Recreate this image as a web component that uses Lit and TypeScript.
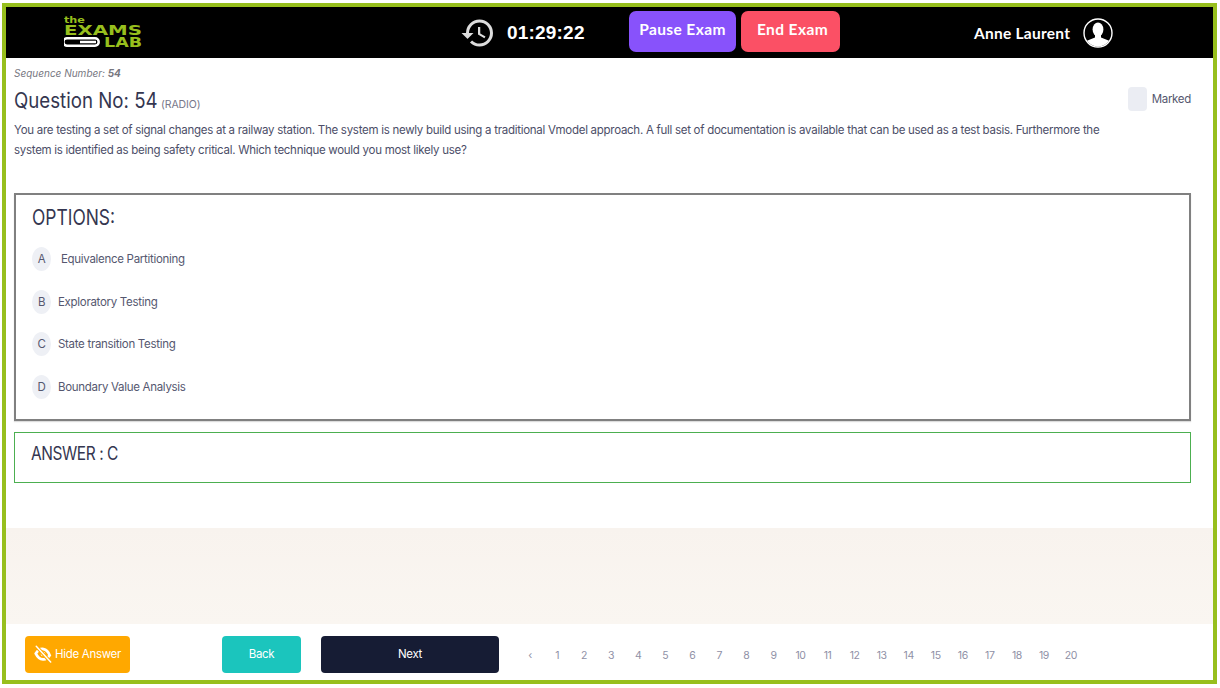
import { LitElement, css, html, svg } from 'lit';
import { customElement, state } from 'lit/decorators.js';

const OPTIONS = [
  { key: 'A', text: 'Equivalence Partitioning', indent: true },
  { key: 'B', text: 'Exploratory Testing', indent: false },
  { key: 'C', text: 'State transition Testing', indent: false },
  { key: 'D', text: 'Boundary Value Analysis', indent: false },
];

const logo = svg`
  <svg class="logo" viewBox="0 0 79 38" width="79" height="38">
    <text x="0" y="10" textLength="21" lengthAdjust="spacingAndGlyphs" class="logo-text small">the</text>
    <text x="0" y="22" textLength="78" lengthAdjust="spacingAndGlyphs" class="logo-text">EXAMS</text>
    <text x="40" y="34" textLength="38" lengthAdjust="spacingAndGlyphs" class="logo-text">LAB</text>
    <path d="M3 25.300H31a3.400 3.400 0 0 1 0 7.400H3a3.700 3.700 0 0 1 0-7.400zM16 29H32" fill="none" stroke="#fff" stroke-width="2.500" />
  </svg>
`;

const historyIcon = svg`
  <svg class="history" viewBox="0 0 24 24" width="36" height="36">
    <path fill="#ddd" d="M13 3a9 9 0 0 0-9 9H1l3.89 3.89.07.14L9 12H6c0-3.87 3.13-7 7-7s7 3.13 7 7-3.13 7-7 7c-1.93 0-3.68-.79-4.94-2.06l-1.42 1.42A8.954 8.954 0 0 0 13 21a9 9 0 0 0 0-18zm-1 5v5l4.28 2.54.72-1.21-3.5-2.08V8H12z" />
  </svg>
`;

const avatarIcon = svg`
  <svg viewBox="0 0 30 30" width="30" height="30">
    <defs><clipPath id="av"><circle cx="15" cy="15" r="13.400" /></clipPath></defs>
    <circle cx="15" cy="15" r="14" fill="#000" stroke="#fff" stroke-width="1.400" />
    <g clip-path="url(#av)" fill="#fff">
      <ellipse cx="15" cy="11.500" rx="5.400" ry="7" />
      <path d="M12 16h6v3.400l7.500 3.200c1.600.8 2.500 2 2.500 3.400v4H2v-4c0-1.400.9-2.600 2.500-3.400L12 19.400z" />
    </g>
  </svg>
`;

const eyeOffIcon = svg`
  <svg viewBox="0 0 20 20" width="18" height="18">
    <path d="M2 9.500C4.500 5.500 7.500 4 10.500 4.500c3 .5 5.500 3 7 7-2 3-4.500 4.800-7.500 4.500-3-.3-6-2.500-8-6.500z" fill="none" stroke="#fff" stroke-width="3" />
    <circle cx="10" cy="10" r="2.600" fill="#fff" />
    <path d="M2.500 1.500L18.500 19" stroke="#ffa800" stroke-width="4" />
    <path d="M2.500 1.500L18.500 19" stroke="#fff" stroke-width="1.600" stroke-linecap="round" />
  </svg>
`;

@customElement('app-root')
export class AppRoot extends LitElement {
  @state() pages = Array.from({ length: 20 }, (_, i) => i + 1);

  render() {
    return html`
      <div class="frame">
        <header class="topbar">
          ${logo}
          ${historyIcon}
          <span class="timer">01:29:22</span>
          <button class="top-btn pause">Pause Exam</button>
          <button class="top-btn end">End Exam</button>
          <span class="user">Anne Laurent</span>
          ${avatarIcon}
        </header>

        <main class="content">
          <div class="sequence">Sequence Number: <b>54</b></div>
          <div class="question-head">
            <h1><span class="squeeze">Question No: 54</span><small>(RADIO)</small></h1>
            <label class="marked"><span class="check"></span>Marked</label>
          </div>
          <p class="question">
            You are testing a set of signal changes at a railway station. The system is newly build using a traditional Vmodel approach. A full set of documentation is available that can be used as a test basis. Furthermore the system is identified as being safety critical. Which technique would you most likely use?
          </p>

          <section class="options">
            <h2><span class="squeeze">OPTIONS:</span></h2>
            ${OPTIONS.map(
              (o) => html`
                <div class="option">
                  <span class="key">${o.key}</span>
                  <span class="label ${o.indent ? 'indent' : ''}">${o.text}</span>
                </div>
              `,
            )}
          </section>

          <section class="answer"><span class="squeeze">ANSWER : C</span></section>
        </main>

        <div class="band"></div>

        <footer class="footer">
          <button class="btn hide">${eyeOffIcon}Hide Answer</button>
          <button class="btn back">Back</button>
          <button class="btn next">Next</button>
          <nav class="pager">
            <span class="page">‹</span>
            ${this.pages.map((p) => html`<span class="page">${p}</span>`)}
          </nav>
        </footer>
      </div>
    `;
  }

  static styles = css`
    :host {
      display: block;
      box-sizing: border-box;
      width: 1220px;
      height: 688px;
      padding: 3px 3px 4px 2px;
      background: #fff;
      font-family: Inter, 'Noto Sans', sans-serif;
      color: #3b3b55;
    }
    * {
      box-sizing: border-box;
    }
    .frame {
      display: flex;
      flex-direction: column;
      height: 100%;
      border: 4px solid #97bf1d;
      background: #fff;
    }
    .topbar {
      display: flex;
      align-items: center;
      flex: 0 0 51px;
      padding-left: 58px;
      background: #000;
    }
    .logo {
      margin-top: -1px;
    }
    .logo-text {
      font-family: 'DejaVu Sans', sans-serif;
      font-weight: 700;
      font-size: 13.700px;
      fill: #97bf1d;
    }
    .logo-text.small {
      font-size: 9.500px;
    }
    .history {
      margin-left: 317px;
      margin-top: 1px;
    }
    .timer {
      margin-left: 11px;
      width: 122px;
      font-family: 'Liberation Sans', sans-serif;
      font-size: 19px;
      font-weight: 700;
      letter-spacing: 0.2px;
      color: #fff;
    }
    .top-btn {
      height: 41px;
      margin-top: -3px;
      padding: 0 0 4px;
      border: 0;
      border-radius: 7px;
      font-family: Lato, sans-serif;
      font-size: 15.500px;
      font-weight: 700;
      letter-spacing: 0.4px;
      color: #fff;
    }
    .pause {
      width: 107px;
      background: #8852fb;
    }
    .end {
      width: 99px;
      margin-left: 5px;
      padding-left: 4px;
      background: #fb5065;
    }
    .user {
      margin-left: 134px;
      width: 109px;
      font-family: Lato, sans-serif;
      font-size: 15.500px;
      font-weight: 700;
      letter-spacing: 0.25px;
      color: #fff;
    }
    .content {
      flex: 0 0 470px;
      padding: 8px 22px 0 8px;
    }
    .sequence {
      font-size: 10px;
      line-height: 14px;
      font-style: italic;
      color: #77777f;
    }
    .question-head {
      display: flex;
      justify-content: space-between;
      align-items: flex-start;
      margin-top: 2px;
    }
    .squeeze {
      display: inline-block;
      transform-origin: left center;
    }
    h1 {
      display: flex;
      align-items: baseline;
      margin: 6px 0 0;
      font-size: 21px;
      line-height: 26px;
      font-weight: 400;
      color: #343650;
    }
    h1 .squeeze {
      width: 147px;
      white-space: nowrap;
      transform: scaleX(0.89);
    }
    h1 small {
      font-size: 10.500px;
      letter-spacing: -0.1px;
      color: #77778a;
    }
    .marked {
      display: flex;
      align-items: center;
      gap: 5px;
      margin-top: 5px;
      font-size: 11.500px;
      letter-spacing: -0.3px;
      color: #55576f;
    }
    .check {
      width: 19px;
      height: 24px;
      border-radius: 4px;
      background: #ebedf3;
    }
    .question {
      margin: 2px 0 0;
      width: 1100px;
      font-size: 11.500px;
      line-height: 20px;
      letter-spacing: -0.28px;
      color: #4c4e68;
    }
    .options {
      height: 228px;
      width: 1177px;
      margin-top: 33px;
      padding: 11px 16px;
      border: 2px solid #808080;
      box-shadow: 0 1px 1px #ddd;
    }
    h2 {
      margin: 0 0 17px;
      font-size: 21px;
      line-height: 24px;
      font-weight: 400;
      color: #343650;
    }
    h2 .squeeze {
      transform: scaleX(0.83);
    }
    .option {
      display: flex;
      align-items: center;
      gap: 7px;
      height: 24px;
      margin-bottom: 18.700px;
      font-size: 11.500px;
      letter-spacing: -0.3px;
      color: #55576f;
    }
    .key {
      display: flex;
      align-items: center;
      justify-content: center;
      width: 19px;
      height: 24px;
      border-radius: 50%;
      background: #eef0f5;
    }
    .indent {
      margin-left: 3px;
    }
    .answer {
      width: 1177px;
      height: 51px;
      margin-top: 11px;
      padding: 9px 16px;
      border: 1px solid #4caf50;
      font-size: 18px;
      line-height: 24px;
      letter-spacing: -0.5px;
      color: #343650;
    }
    .answer .squeeze {
      transform: scaleX(0.86);
    }
    .band {
      flex: 0 0 96px;
      background: linear-gradient(#f8f3ee, #faf6f1);
    }
    .footer {
      display: flex;
      align-items: flex-start;
      flex: 1;
      padding: 12px 0 0 19px;
    }
    .btn {
      display: flex;
      align-items: center;
      justify-content: center;
      height: 37px;
      padding: 0 0 2px;
      border: 0;
      border-radius: 4px;
      font-family: Inter, sans-serif;
      font-size: 11.500px;
      letter-spacing: -0.3px;
      color: #fff;
    }
    .hide {
      gap: 3px;
      width: 105px;
      background: #ffa800;
    }
    .back {
      width: 79px;
      margin-left: 92px;
      background: #1bc5bd;
    }
    .next {
      width: 178px;
      margin-left: 20px;
      background: #161c34;
    }
    .pager {
      display: flex;
      margin-left: 17.500px;
      padding-top: 13px;
    }
    .page {
      width: 27.050px;
      font-size: 10.500px;
      line-height: 14px;
      letter-spacing: -0.4px;
      text-align: center;
      color: #8f90a6;
    }
  `;
}

declare global {
  interface HTMLElementTagNameMap {
    'app-root': AppRoot;
  }
}
